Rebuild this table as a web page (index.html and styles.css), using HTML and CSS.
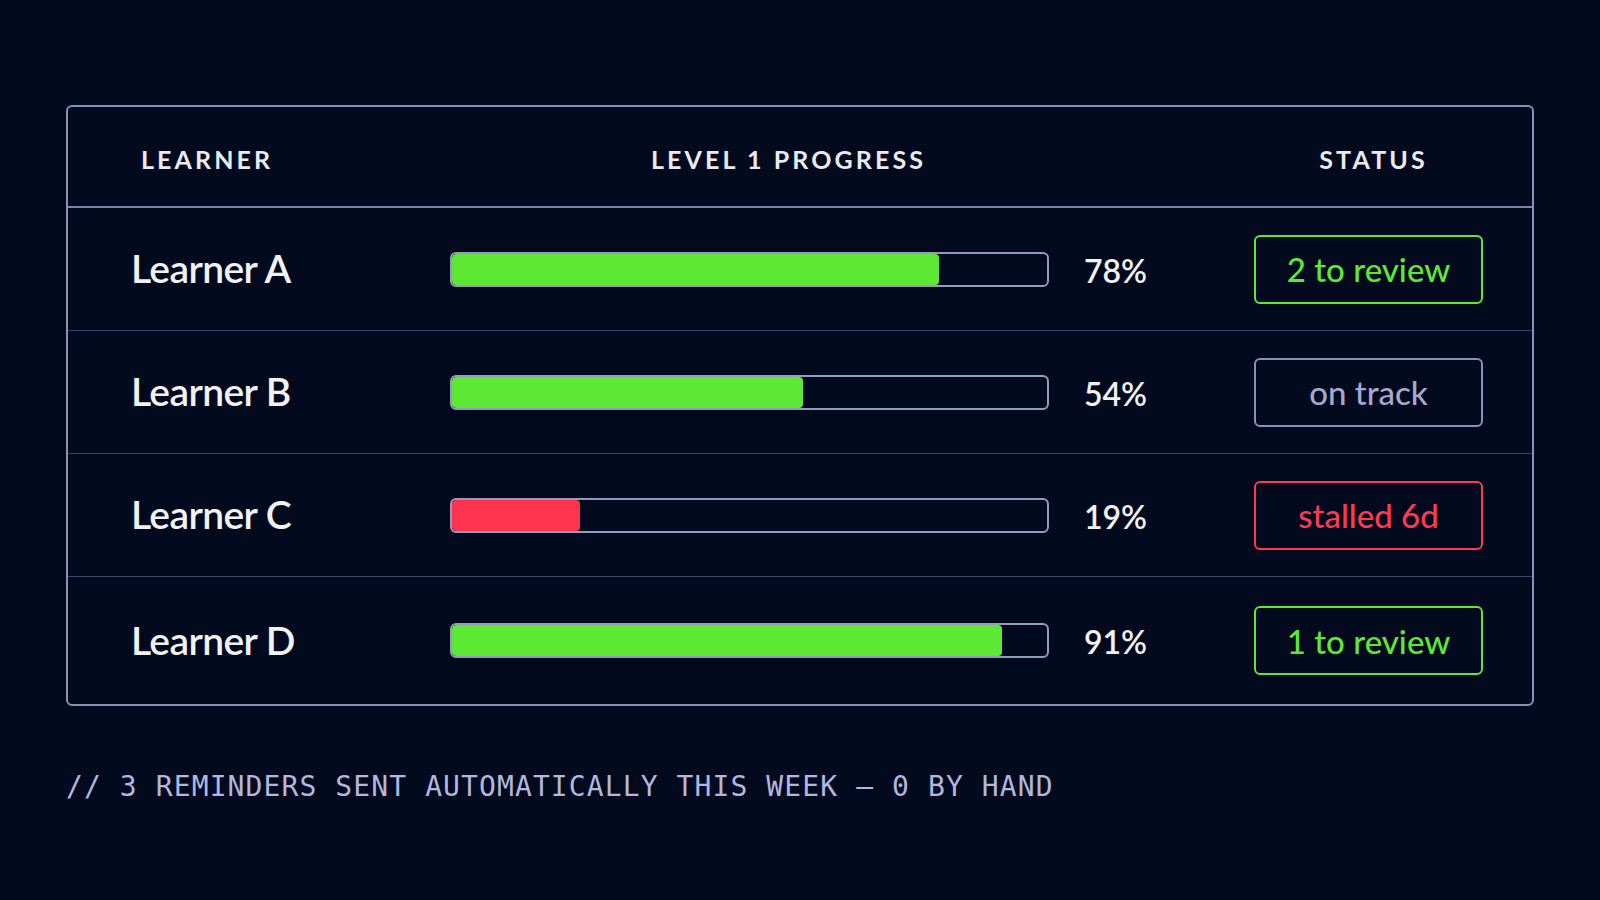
FILE: index.html
```html
<!DOCTYPE html>
<html lang="en">
<head>
<meta charset="utf-8">
<title>Level 1 progress</title>
<link rel="stylesheet" href="styles.css">
</head>
<body>
<main class="page">
  <section class="table">
    <div class="head">
      <div class="h h-learner">LEARNER</div>
      <div class="h h-progress">LEVEL 1 PROGRESS</div>
      <div class="h h-status">STATUS</div>
    </div>
    <div class="row">
      <div class="name">Learner A</div>
      <div class="bar"><div class="fill green" style="width:81.8%"></div></div>
      <div class="pct">78%</div>
      <div class="pill pill-green">2 to review</div>
    </div>
    <div class="row">
      <div class="name">Learner B</div>
      <div class="bar"><div class="fill green" style="width:59%"></div></div>
      <div class="pct">54%</div>
      <div class="pill pill-muted">on track</div>
    </div>
    <div class="row">
      <div class="name">Learner C</div>
      <div class="bar"><div class="fill red" style="width:21.5%"></div></div>
      <div class="pct">19%</div>
      <div class="pill pill-red">stalled 6d</div>
    </div>
    <div class="row">
      <div class="name">Learner D</div>
      <div class="bar"><div class="fill green" style="width:92.4%"></div></div>
      <div class="pct">91%</div>
      <div class="pill pill-green">1 to review</div>
    </div>
  </section>
  <p class="note">// 3 REMINDERS SENT AUTOMATICALLY THIS WEEK — 0 BY HAND</p>
</main>
</body>
</html>
```
FILE: styles.css
```css
html, body {
  margin: 0;
  padding: 0;
  background: #030a1d;
  width: 1600px;
  height: 900px;
  overflow: hidden;
}

.page {
  padding: 105px 0 0 66px;
  width: 1468px;
  font-family: Lato, "Noto Sans", sans-serif;
  color: #f1f2f6;
}

.table {
  border: 2px solid #8a91b6;
  border-radius: 6px;
  box-sizing: border-box;
  width: 1468px;
}

.head,
.row {
  display: grid;
  grid-template-columns: 316px 599px 205px 229px;
  column-gap: 0;
  padding: 0 46px 0 66px;
  align-items: center;
}

.head {
  height: 99px;
  border-bottom: 2px solid #7b83a8;
}

.h {
  font-weight: 700;
  font-size: 25px;
  letter-spacing: 3.1px;
  color: #e9eaf0;
  padding-top: 4px;
}

.h-learner { padding-left: 7px; }
.h-progress { padding-left: 201px; grid-column: 2 / 4; }
.h-status { text-align: center; padding-left: 10px; }

.row {
  height: 122px;
  border-bottom: 1px solid #3d4466;
}

.row:last-child {
  border-bottom: none;
  height: 127px;
}

.name {
  font-size: 39px;
  font-weight: 600;
  letter-spacing: -0.6px;
  margin-left: -3px;
  padding-bottom: 2px;
}

.bar {
  height: 35px;
  box-sizing: border-box;
  border: 2px solid #959bbd;
  border-radius: 6px;
  padding: 0;
  overflow: hidden;
}

.fill {
  height: 100%;
  border-radius: 4px;
}

.green { background: #5ce835; }
.red { background: #fd334f; }

.pct {
  font-size: 32px;
  font-weight: 600;
  padding-left: 35px;
  padding-top: 2px;
}

.pill {
  height: 69px;
  box-sizing: border-box;
  border: 2px solid;
  border-radius: 6px;
  display: flex;
  align-items: center;
  justify-content: center;
  font-size: 33px;
  font-weight: 500;
}

.pill-green { color: #5ce835; border-color: #5ce835; }
.pill-red { color: #fd3a55; border-color: #fd3a55; }
.pill-muted { color: #a3a9cf; border-color: #8a91b6; }

.note {
  margin: 64px 0 0 0;
  font-family: "DejaVu Sans Mono", "Liberation Mono", monospace;
  font-size: 28px;
  letter-spacing: 1.1px;
  color: #b1b7df;
  white-space: nowrap;
}
```
